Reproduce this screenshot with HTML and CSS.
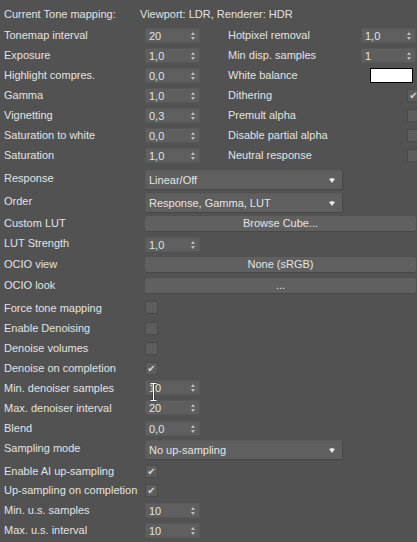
FILE: index.html
```html
<!DOCTYPE html>
<html lang="en">
  <head>
    <meta charset="UTF-8" />
    <title>Tone mapping</title>
    <link rel="stylesheet" href="styles.css">
  </head>
  <body>
    <div class="panel">
      <div class="row head">
        <span class="label hl">Current Tone mapping:</span>
        <span>Viewport: LDR, Renderer: HDR</span>
      </div>

      <div class="row">
        <span class="label">Tonemap interval</span>
        <div class="spin">20</div>
        <span class="label2">Hotpixel removal</span>
        <div class="spin">1,0</div>
      </div>
      <div class="row">
        <span class="label">Exposure</span>
        <div class="spin">1,0</div>
        <span class="label2">Min disp. samples</span>
        <div class="spin">1</div>
      </div>
      <div class="row">
        <span class="label">Highlight compres.</span>
        <div class="spin">0,0</div>
        <span class="label2 wb">White balance</span>
        <div class="swatch"></div>
      </div>
      <div class="row">
        <span class="label">Gamma</span>
        <div class="spin">1,0</div>
        <span class="label2 cb">Dithering</span>
        <div class="check on"></div>
      </div>
      <div class="row">
        <span class="label">Vignetting</span>
        <div class="spin">0,3</div>
        <span class="label2 cb">Premult alpha</span>
        <div class="check"></div>
      </div>
      <div class="row">
        <span class="label">Saturation to white</span>
        <div class="spin">0,0</div>
        <span class="label2 cb">Disable partial alpha</span>
        <div class="check"></div>
      </div>
      <div class="row">
        <span class="label">Saturation</span>
        <div class="spin">1,0</div>
        <span class="label2 cb">Neutral response</span>
        <div class="check"></div>
      </div>

      <div class="row r-drop first">
        <span class="label up">Response</span>
        <div class="drop">Linear/Off</div>
      </div>
      <div class="row r-drop">
        <span class="label up">Order</span>
        <div class="drop">Response, Gamma, LUT</div>
      </div>
      <div class="row r-btn">
        <span class="label up1">Custom LUT</span>
        <div class="btn">Browse Cube...</div>
      </div>
      <div class="row r-22">
        <span class="label up1">LUT Strength</span>
        <div class="spin">1,0</div>
      </div>
      <div class="row">
        <span class="label up1">OCIO view</span>
        <div class="btn">None (sRGB)</div>
      </div>
      <div class="row r-22">
        <span class="label up1">OCIO look</span>
        <div class="btn">...</div>
      </div>

      <div class="row r-21">
        <span class="label">Force tone mapping</span>
        <div class="check"></div>
      </div>
      <div class="row">
        <span class="label">Enable Denoising</span>
        <div class="check"></div>
      </div>
      <div class="row">
        <span class="label">Denoise volumes</span>
        <div class="check"></div>
      </div>
      <div class="row">
        <span class="label">Denoise on completion</span>
        <div class="check on"></div>
      </div>
      <div class="row r-19">
        <span class="label">Min. denoiser samples</span>
        <div class="spin">10</div>
      </div>
      <div class="row r-21">
        <span class="label">Max. denoiser interval</span>
        <div class="spin">20</div>
      </div>
      <div class="row">
        <span class="label">Blend</span>
        <div class="spin">0,0</div>
      </div>
      <div class="row r-24">
        <span class="label up">Sampling mode</span>
        <div class="drop">No up-sampling</div>
      </div>
      <div class="row r-18">
        <span class="label">Enable AI up-sampling</span>
        <div class="check on"></div>
      </div>
      <div class="row">
        <span class="label">Up-sampling on completion</span>
        <div class="check on"></div>
      </div>
      <div class="row">
        <span class="label">Min. u.s. samples</span>
        <div class="spin">10</div>
      </div>
      <div class="row">
        <span class="label">Max. u.s. interval</span>
        <div class="spin">10</div>
      </div>

      <!-- mouse cursor over the min denoiser field -->
      <svg class="ibeam" width="9" height="20" viewBox="0 0 9 20">
        <path d="M1.5 1.5h6M4.5 1.5v17M1.5 18.5h6" stroke="#1e1e1e" stroke-opacity="0.6" stroke-width="2" fill="none"/>
        <path d="M1.5 1.5h6M4.5 1.5v17M1.5 18.5h6" stroke="#fff" stroke-width="1" fill="none"/>
      </svg>
    </div>
  </body>
</html>
```

FILE: styles.css
```css
html,
body {
  margin: 0;
  background-color: #525252;
  overflow: hidden;
}

.panel {
  position: relative;
  width: 430px;
  padding: 0 0 0 4px;
  font-family: "Liberation Sans", Arial, sans-serif;
  font-size: 11px;
  color: #e2e2e2;
}

.row {
  display: flex;
  align-items: center;
  height: 20px;
  white-space: nowrap;
}

.head {
  height: 22px;
  padding-top: 3px;
}

.label {
  width: 141px;
  flex: none;
}

.hl {
  width: 136px;
}

.up {
  align-self: flex-start;
  padding-top: 4px;
}

.up1 {
  position: relative;
  top: -1px;
}

.label2 {
  width: 133px;
  margin-left: 28px;
  flex: none;
}

.label2.wb {
  width: 142px;
}

.label2.cb {
  width: 179px;
}

.first {
  margin-top: 3px;
}

.r-drop {
  height: 23px;
}

.r-btn {
  height: 19px;
}

.r-22 {
  height: 22px;
}

.r-21 {
  height: 21px;
}

.r-19 {
  height: 19px;
}

.r-24 {
  height: 24px;
}

.r-18 {
  height: 18px;
}

/* spinner */
.spin {
  position: relative;
  box-sizing: border-box;
  width: 55px;
  height: 15px;
  line-height: 14px;
  padding-left: 3px;
  background-color: #5f5f5f;
  border: 1px solid #585858;
  color: #dfe3ea;
  flex: none;
}

.spin::before,
.spin::after {
  content: "";
  position: absolute;
  right: 4px;
  border-left: 2.5px solid transparent;
  border-right: 2.5px solid transparent;
}

.spin::before {
  top: 3px;
  border-bottom: 3px solid #bdbdbd;
}

.spin::after {
  top: 8px;
  border-top: 3px solid #bdbdbd;
}

/* dropdown */
.drop {
  position: relative;
  box-sizing: border-box;
  width: 198px;
  height: 20px;
  line-height: 18px;
  padding-left: 3px;
  background-color: #5f5f5f;
  border: 1px solid #474747;
  border-top-color: #5a5a5a;
  border-left-color: #5a5a5a;
  color: #e4e4e4;
  flex: none;
}

.drop::after {
  content: "";
  position: absolute;
  right: 7px;
  top: 7px;
  border-top: 1px solid #e8e8e8;
  border-left: 3.5px solid transparent;
  border-right: 3.5px solid transparent;
  height: 0;
  width: 0;
}

.drop::before {
  content: "";
  position: absolute;
  right: 7px;
  top: 8px;
  border-top: 4px solid #e8e8e8;
  border-left: 3.5px solid transparent;
  border-right: 3.5px solid transparent;
}

/* push button */
.btn {
  box-sizing: border-box;
  width: 271px;
  height: 16px;
  line-height: 15px;
  text-align: center;
  background-color: #606060;
  border-radius: 3px;
  border-bottom: 1px solid #484848;
  color: #e4e4e4;
  flex: none;
}

/* checkbox */
.check {
  box-sizing: border-box;
  width: 13px;
  height: 13px;
  background-color: #5d5d5d;
  border: 1px solid #4a4a4a;
  flex: none;
  text-align: center;
  font-family: "DejaVu Sans", sans-serif;
  font-size: 10px;
  line-height: 12px;
  color: #d2d2d2;
}

.check.on::before {
  content: "\2714";
}

.swatch {
  box-sizing: border-box;
  width: 43px;
  height: 15px;
  background-color: #ffffff;
  border: 1px solid #000;
  flex: none;
}

.ibeam {
  position: absolute;
  left: 149px;
  top: 382px;
}
```
